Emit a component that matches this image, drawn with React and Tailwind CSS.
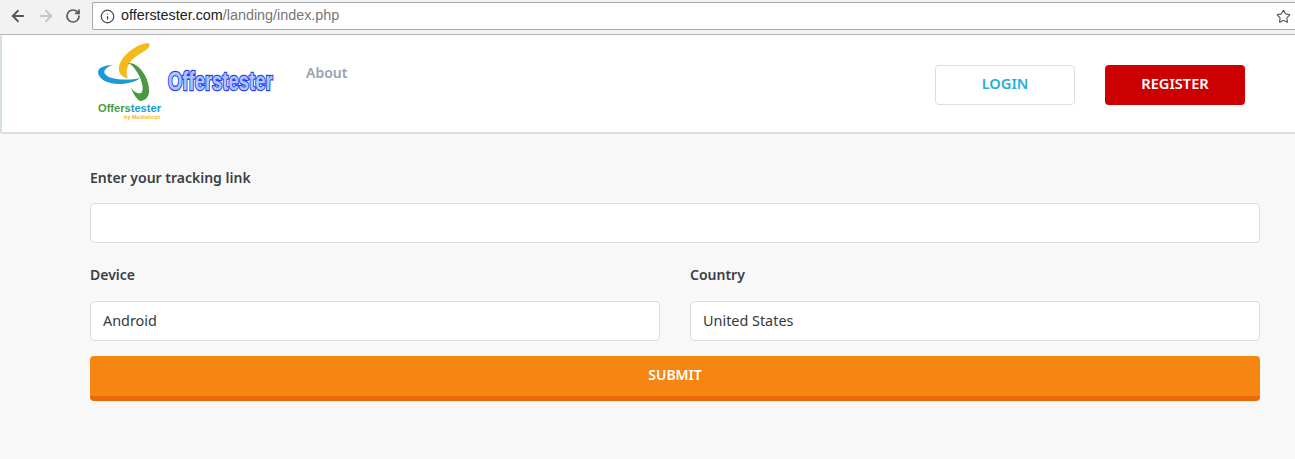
import { ArrowLeft, ArrowRight, RotateCw, Info, Star } from "lucide-react";

function Logo() {
  return (
    <svg width="70" height="84" viewBox="0 0 70 84" className="shrink-0">
      {/* blue swoosh */}
      <path d="M17 23 C8 23 2 26 2 30 C2 37 12 42 22 42 C30 42 40 40 44 36 C36 38 24 38 16 36 C9 34 7 30 9 28 C11 25 14 24 17 23 Z" fill="#1b9ad6" />
      {/* yellow swoosh */}
      <path d="M53 1 C42 1 25 13 23 25 C22 31 26 36 32 36 C29 30 31 22 38 16 C45 10 56 7 53 1 Z" fill="#f6b91c" />
      {/* green swoosh */}
      <path d="M32 21 C42 20 52 34 53 46 C54 54 50 59 44 59 C40 57 37 51 35 46 C39 51 44 53 46 50 C48 45 45 36 41 30 C38 25 35 22 32 21 Z" fill="#4b9a3f" />
      <text x="2" y="70" fontFamily="'Liberation Sans', sans-serif" fontWeight="700" fontSize="11.5" fill="#4b9a3f" textLength="63" lengthAdjust="spacingAndGlyphs">
        Offers<tspan fill="#1b9ad6">tester</tspan>
      </text>
      <text x="28" y="77" fontFamily="'Liberation Sans', sans-serif" fontWeight="700" fontSize="5" fill="#f6b91c" textLength="36" lengthAdjust="spacingAndGlyphs">
        by Mediahopt
      </text>
    </svg>
  );
}

export default function App() {
  return (
    <div className="min-h-[459px] bg-[#f8f8f8] font-['Noto_Sans',sans-serif] overflow-hidden">
      {/* browser toolbar */}
      <div className="h-[35px] bg-[#f2f2f2] border-b border-[#b4b4b4] flex items-start pt-[2px]">
        <div className="w-[92px] h-[27px] flex items-center pl-[9px] gap-[10px] shrink-0">
          <ArrowLeft size={18} strokeWidth={2.4} className="text-[#5a5a5a]" />
          <ArrowRight size={18} strokeWidth={2.4} className="text-[#c6c6c6]" />
          <RotateCw size={16} strokeWidth={2.6} className="text-[#5a5a5a]" />
        </div>
        <div className="flex-1 h-[28px] bg-white border border-r-0 border-[#a9a9a9] rounded-l-[2px] flex items-center pl-[7px] pr-[3px]">
          <Info size={15} strokeWidth={2} className="text-[#4a4a4a] mr-[6px]" />
          <span className="text-[14.35px] font-['Liberation_Sans',sans-serif] text-[#222]">
            offerstester.com<span className="text-[#777]">/landing/index.php</span>
          </span>
          <Star size={15} strokeWidth={1.8} className="ml-auto text-[#555] mr-[1px]" />
        </div>
      </div>

      {/* site header */}
      <header className="h-[99px] bg-white border-l-2 border-b-2 border-[#d5dfe6] rounded-l-[3px] flex items-start pl-[94px] pr-[50px]">
        <div className="pt-[7px]">
          <Logo />
        </div>
        <div className="ml-[2px] mt-[33px] text-[26px] leading-[26px] font-['Liberation_Sans',sans-serif] font-bold text-[#a8c8ff] [-webkit-text-stroke:2.5px_#2f3ff0] [paint-order:stroke_fill] w-[106px] whitespace-nowrap origin-left scale-x-[0.71]">
          Offerstester
        </div>
        <a className="ml-[32px] mt-[28px] text-[14px] leading-[20px] font-semibold text-[#96a3ae]">About</a>
        <div className="ml-auto mt-[30px] flex gap-[30px]">
          <button className="w-[140px] h-[40px] pb-[2px] bg-white border border-[#dcdfe3] rounded-[4px] text-[14.6px] font-semibold text-[#25aee0]">
            LOGIN
          </button>
          <button className="w-[140px] h-[40px] pb-[2px] bg-[#cc0000] rounded-[4px] text-[14.6px] font-semibold text-white">
            REGISTER
          </button>
        </div>
      </header>

      {/* tracking form */}
      <main className="pl-[90px] pr-[35px] pt-[34px]">
        <label className="block text-[14px] leading-[20px] font-semibold text-[#3a4046]">Enter your tracking link</label>
        <input className="block mt-[15px] w-full h-[40px] bg-white border border-[#dedede] rounded-[4px]" />

        <div className="grid grid-cols-2 gap-[30px] mt-[22px]">
          <div>
            <label className="block text-[14px] leading-[20px] font-semibold text-[#3a4046]">Device</label>
            <input readOnly value="Android" className="block mt-[16px] w-full h-[40px] pb-[2px] bg-white border border-[#dedede] rounded-[4px] px-[12px] text-[14.4px] text-[#33383d]" />
          </div>
          <div>
            <label className="block text-[14px] leading-[20px] font-semibold text-[#3a4046]">Country</label>
            <input readOnly value="United States" className="block mt-[16px] w-full h-[40px] pb-[2px] bg-white border border-[#dedede] rounded-[4px] px-[12px] text-[14.4px] text-[#33383d]" />
          </div>
        </div>

        <button className="block mt-[15px] w-full h-[45px] pb-[3px] bg-[#f68512] border-b-[5px] border-[#e96a06] rounded-[4px] text-[14px] font-semibold text-white">
          SUBMIT
        </button>
      </main>
    </div>
  );
}
